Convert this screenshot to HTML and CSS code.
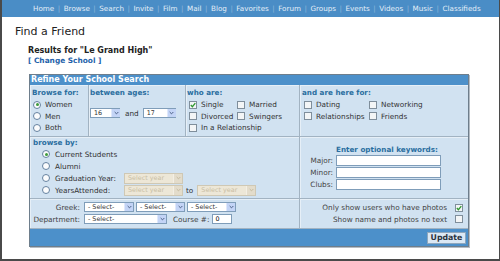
FILE: index.html
```html
<!DOCTYPE html>
<html lang="en">
<head>
    <meta charset="UTF-8">
    <title>Find a Friend</title>
    <link rel="stylesheet" href="styles.css">
</head>
<body>
<div class="page">
    <div class="nav">
        <a>Home</a><i>|</i><a>Browse</a><i>|</i><a>Search</a><i>|</i><a>Invite</a><i>|</i><a>Film</a><i>|</i><a>Mail</a><i>|</i><a>Blog</a><i>|</i><a>Favorites</a><i>|</i><a>Forum</a><i>|</i><a>Groups</a><i>|</i><a>Events</a><i>|</i><a>Videos</a><i>|</i><a>Music</a><i>|</i><a>Classifieds</a>
    </div>
    <h1 class="title">Find a Friend</h1>
    <div class="results">
        <div class="res-title">Results for "Le Grand High"</div>
        <a class="change">[ Change School ]</a>
    </div>

    <div class="panel">
        <div class="panel-head">Refine Your School Search</div>
        <div class="grid">
            <!-- row 1 -->
            <div class="cell c1">
                <div class="lbl">Browse for:</div>
                <div class="opts">
                    <div class="opt"><span class="rb on"></span>Women</div>
                    <div class="opt"><span class="rb"></span>Men</div>
                    <div class="opt"><span class="rb"></span>Both</div>
                </div>
            </div>
            <div class="cell c2">
                <div class="lbl">between ages:</div>
                <div class="ages">
                    <span class="sel w30"><span class="txt">16</span><span class="arr"><svg viewBox="0 0 6 4"><path d="M0.8 0.8 L3 3 L5.2 0.8"/></svg></span></span>
                    <span>and</span>
                    <span class="sel w33"><span class="txt">17</span><span class="arr"><svg viewBox="0 0 6 4"><path d="M0.8 0.8 L3 3 L5.2 0.8"/></svg></span></span>
                </div>
            </div>
            <div class="cell c3">
                <div class="lbl">who are:</div>
                <div class="checks who">
                    <div class="opt"><span class="cb"><svg viewBox="0 0 6 6"><path d="M0.8 3 L2.4 4.7 L5.3 1.2"/></svg></span>Single</div>
                    <div class="opt"><span class="cb"></span>Married</div>
                    <div class="opt"><span class="cb"></span>Divorced</div>
                    <div class="opt"><span class="cb"></span>Swingers</div>
                    <div class="opt wide"><span class="cb"></span>In a Relationship</div>
                </div>
            </div>
            <div class="cell c4">
                <div class="lbl">and are here for:</div>
                <div class="checks here">
                    <div class="opt"><span class="cb"></span>Dating</div>
                    <div class="opt"><span class="cb"></span>Networking</div>
                    <div class="opt"><span class="cb"></span>Relationships</div>
                    <div class="opt"><span class="cb"></span>Friends</div>
                </div>
            </div>

            <!-- row 2 -->
            <div class="cell span3 c-by">
                <div class="lbl">browse by:</div>
                <div class="by">
                    <div class="opt"><span class="rb on"></span>Current Students</div>
                    <div class="opt"><span class="rb"></span>Alumni</div>
                    <div class="opt"><span class="rb"></span><span class="by-lbl">Graduation Year:</span>
                        <span class="sel off"><span class="txt">Select year</span><span class="arr"><svg viewBox="0 0 6 4"><path d="M0.8 0.8 L3 3 L5.2 0.8"/></svg></span></span>
                    </div>
                    <div class="opt"><span class="rb"></span><span class="by-lbl">YearsAttended:</span>
                        <span class="sel off"><span class="txt">Select year</span><span class="arr"><svg viewBox="0 0 6 4"><path d="M0.8 0.8 L3 3 L5.2 0.8"/></svg></span></span>
                        <span class="to">to</span>
                        <span class="sel off"><span class="txt">Select year</span><span class="arr"><svg viewBox="0 0 6 4"><path d="M0.8 0.8 L3 3 L5.2 0.8"/></svg></span></span>
                    </div>
                </div>
            </div>
            <div class="cell c-kw">
                <div class="kw">
                    <div class="lbl kw-head">Enter optional keywords:</div>
                    <label>Major:</label><input type="text">
                    <label>Minor:</label><input type="text">
                    <label>Clubs:</label><input type="text">
                </div>
            </div>

            <!-- row 3 -->
            <div class="cell span3 c-greek">
                <div class="greek">
                    <label>Greek:</label>
                    <div class="line">
                        <span class="sel w50"><span class="txt">- Select-</span><span class="arr"><svg viewBox="0 0 6 4"><path d="M0.8 0.8 L3 3 L5.2 0.8"/></svg></span></span>
                        <span class="sel w49"><span class="txt">- Select-</span><span class="arr"><svg viewBox="0 0 6 4"><path d="M0.8 0.8 L3 3 L5.2 0.8"/></svg></span></span>
                        <span class="sel w49"><span class="txt">- Select-</span><span class="arr"><svg viewBox="0 0 6 4"><path d="M0.8 0.8 L3 3 L5.2 0.8"/></svg></span></span>
                    </div>
                    <label>Department:</label>
                    <div class="line">
                        <span class="sel w83"><span class="txt">- Select-</span><span class="arr"><svg viewBox="0 0 6 4"><path d="M0.8 0.8 L3 3 L5.2 0.8"/></svg></span></span>
                        <span class="course">Course #:</span>
                        <input class="num" type="text" value="0">
                    </div>
                </div>
            </div>
            <div class="cell c-show">
                <div class="show">Only show users who have photos<span class="cb"><svg viewBox="0 0 6 6"><path d="M0.8 3 L2.4 4.7 L5.3 1.2"/></svg></span></div>
                <div class="show">Show name and photos no text<span class="cb"></span></div>
            </div>
        </div>
        <div class="panel-foot">
            <button class="update">Update</button>
        </div>
    </div>
</div>
</body>
</html>
```

FILE: styles.css
```css
*{
    margin: 0;
    padding: 0;
    box-sizing: border-box;
}
body{
    font-family: "DejaVu Sans", Verdana, sans-serif;
    color: #333;
    background: #fff;
}
.page{
    height: 261px;
    border-left: 2px solid #4a4a4a;
    border-right: 1px solid #4a4a4a;
    border-bottom: 2px solid #4a4a4a;
    overflow: hidden;
}
.nav{
    height: 17px;
    background: #4a8dc6;
    display: flex;
    align-items: center;
    padding-left: 31px;
    font-size: 7.2px;
    color: #e4eef8;
    white-space: nowrap;
}
.nav i{
    font-style: normal;
    color: #8db6da;
    margin: 0 3.5px;
}
.title{
    font-size: 11px;
    font-weight: normal;
    line-height: 13px;
    margin: 8px 0 0 13px;
    color: #222;
}
.results{
    margin: 8px 0 0 26px;
}
.res-title{
    font-size: 8px;
    font-weight: bold;
    line-height: 10px;
    color: #222;
}
.change{
    display: block;
    font-size: 7.4px;
    font-weight: bold;
    line-height: 10px;
    color: #1f62aa;
}
.panel{
    width: 440px;
    margin: 8px 0 0 27px;
    border: 1px solid #6e7e8c;
    background: #d1e2f1;
    box-shadow: 1px 1px 0 #b4bcc4;
}
.panel-head{
    height: 10px;
    background: #4c90ca;
    color: #fff;
    font-size: 8px;
    font-weight: bold;
    line-height: 10px;
    padding-left: 1px;
}
.grid{
    display: grid;
    grid-template-columns: 59px 97px 114px 1fr;
    grid-template-rows: 52px 62px 30px;
    font-size: 7.3px;
}
.cell{
    border-right: 1px solid #a2b3c2;
    border-bottom: 1px solid #a2b3c2;
    box-shadow: inset 1px 1px 0 #e6eff7;
}
.c4, .c-kw, .c-show{
    border-right: none;
}
.span3{
    grid-column: span 3;
}
.lbl{
    font-size: 7.2px;
    font-weight: bold;
    color: #2a6e9f;
    line-height: 10px;
    white-space: nowrap;
}
.opt{
    display: flex;
    align-items: center;
    height: 11.6px;
    white-space: nowrap;
}

/* radios and checkboxes */
.rb{
    width: 8px;
    height: 8px;
    border: 1px solid #6582a0;
    border-radius: 50%;
    background: #fbfcfd;
    display: inline-flex;
    align-items: center;
    justify-content: center;
    flex: none;
}
.rb.on::after{
    content: "";
    width: 3px;
    height: 3px;
    border-radius: 50%;
    background: #3f9b3c;
}
.cb{
    width: 8px;
    height: 8px;
    border: 1px solid #7f8e9b;
    background: #f3f5f6;
    display: inline-flex;
    align-items: center;
    justify-content: center;
    flex: none;
}
.cb svg{
    width: 6px;
    height: 6px;
    fill: none;
    stroke: #2f982f;
    stroke-width: 1.3;
}

/* selects */
.sel{
    display: inline-flex;
    align-items: stretch;
    height: 10px;
    border: 1px solid #7f9db9;
    background: #fff;
    font-size: 6.4px;
    line-height: 8px;
    flex: none;
}
.sel .txt{
    flex: 1;
    padding-left: 3px;
    overflow: hidden;
    white-space: nowrap;
}
.sel .arr{
    width: 9px;
    margin: 0;
    background: #c3d4f6;
    border-left: 1px solid #dfe8fb;
    display: flex;
    align-items: center;
    justify-content: center;
}
.sel .arr svg{
    width: 5px;
    height: 4px;
    fill: none;
    stroke: #4b5f86;
    stroke-width: 1.2;
}
.sel.off{
    width: 59px;
    height: 11px;
    background: #ede7d7;
    border-color: #cfc8b4;
    color: #c9bea4;
}
.sel.off .arr{
    background: #e3dccb;
    border-left-color: #f3efe5;
}
.sel.off .arr svg{
    stroke: #c3b89e;
}
.w30{ width: 30px; }
.w33{ width: 33px; }
.w49{ width: 49px; }
.w50{ width: 50px; }
.w83{ width: 83px; }

/* row 1 */
.c1{
    padding: 3px 0 0 2px;
}
.c1 .opts{
    margin: 1px 0 0 1px;
}
.c1 .rb{
    margin-right: 4px;
}
.c2{
    padding: 3px 0 0 1px;
}
.ages{
    display: flex;
    align-items: center;
    gap: 5px;
    margin-top: 10px;
}
.ages span:nth-child(2){
    margin-right: -1px;
}
.c3{
    padding: 3px 0 0 1px;
}
.checks{
    display: grid;
    margin: 1px 0 0 2px;
}
.who{
    grid-template-columns: 48px auto;
}
.here{
    grid-template-columns: 65px auto;
}
.checks .cb{
    margin-right: 4px;
}
.checks .wide{
    grid-column: span 2;
}
.c4{
    padding: 3px 0 0 2px;
}

/* row 2 */
.c-by{
    padding: 1px 0 0 3px;
}
.by{
    margin-left: 9px;
}
.by .opt{
    height: 12px;
}
.by .rb{
    margin-right: 5px;
}
.by-lbl{
    width: 69px;
}
.to{
    margin: 0 4px 0 3px;
}
.c-kw{
    padding: 8px 0 0 6px;
}
.kw{
    display: grid;
    grid-template-columns: 30px 105px;
    row-gap: 1px;
    align-items: center;
}
.kw-head{
    grid-column: 2;
    line-height: 9px;
}
.kw label{
    text-align: right;
    padding-right: 3px;
    color: #444;
}
.kw input{
    height: 11px;
    border: 1px solid #7f9db9;
    background: #fff;
}

/* row 3 */
.c-greek{
    padding: 3px 0 0 3px;
}
.greek{
    display: grid;
    grid-template-columns: 47px auto;
    column-gap: 4px;
    row-gap: 2px;
    align-items: center;
}
.greek label{
    text-align: right;
    color: #444;
}
.line{
    display: flex;
    align-items: center;
    gap: 2px;
}
.course{
    margin: 0 1px 0 4px;
    color: #444;
}
.num{
    width: 20px;
    height: 10px;
    border: 1px solid #7f9db9;
    background: #fff;
    font-family: inherit;
    font-size: 6.4px;
    padding-left: 2px;
}
.c-show{
    padding: 3px 5px 0 0;
}
.show{
    display: flex;
    justify-content: flex-end;
    align-items: center;
    height: 11.5px;
    color: #444;
    white-space: nowrap;
}
.show .cb{
    margin-left: 8px;
}

.panel-foot{
    height: 17px;
    background: #4c90ca;
    display: flex;
    justify-content: flex-end;
    align-items: center;
    padding-right: 2px;
}
.update{
    width: 39px;
    height: 12px;
    background: #dbe8f4;
    border: 1px solid #8ea7bd;
    font-family: inherit;
    font-size: 7.8px;
    font-weight: bold;
    color: #2b3440;
    line-height: 10px;
}
```
